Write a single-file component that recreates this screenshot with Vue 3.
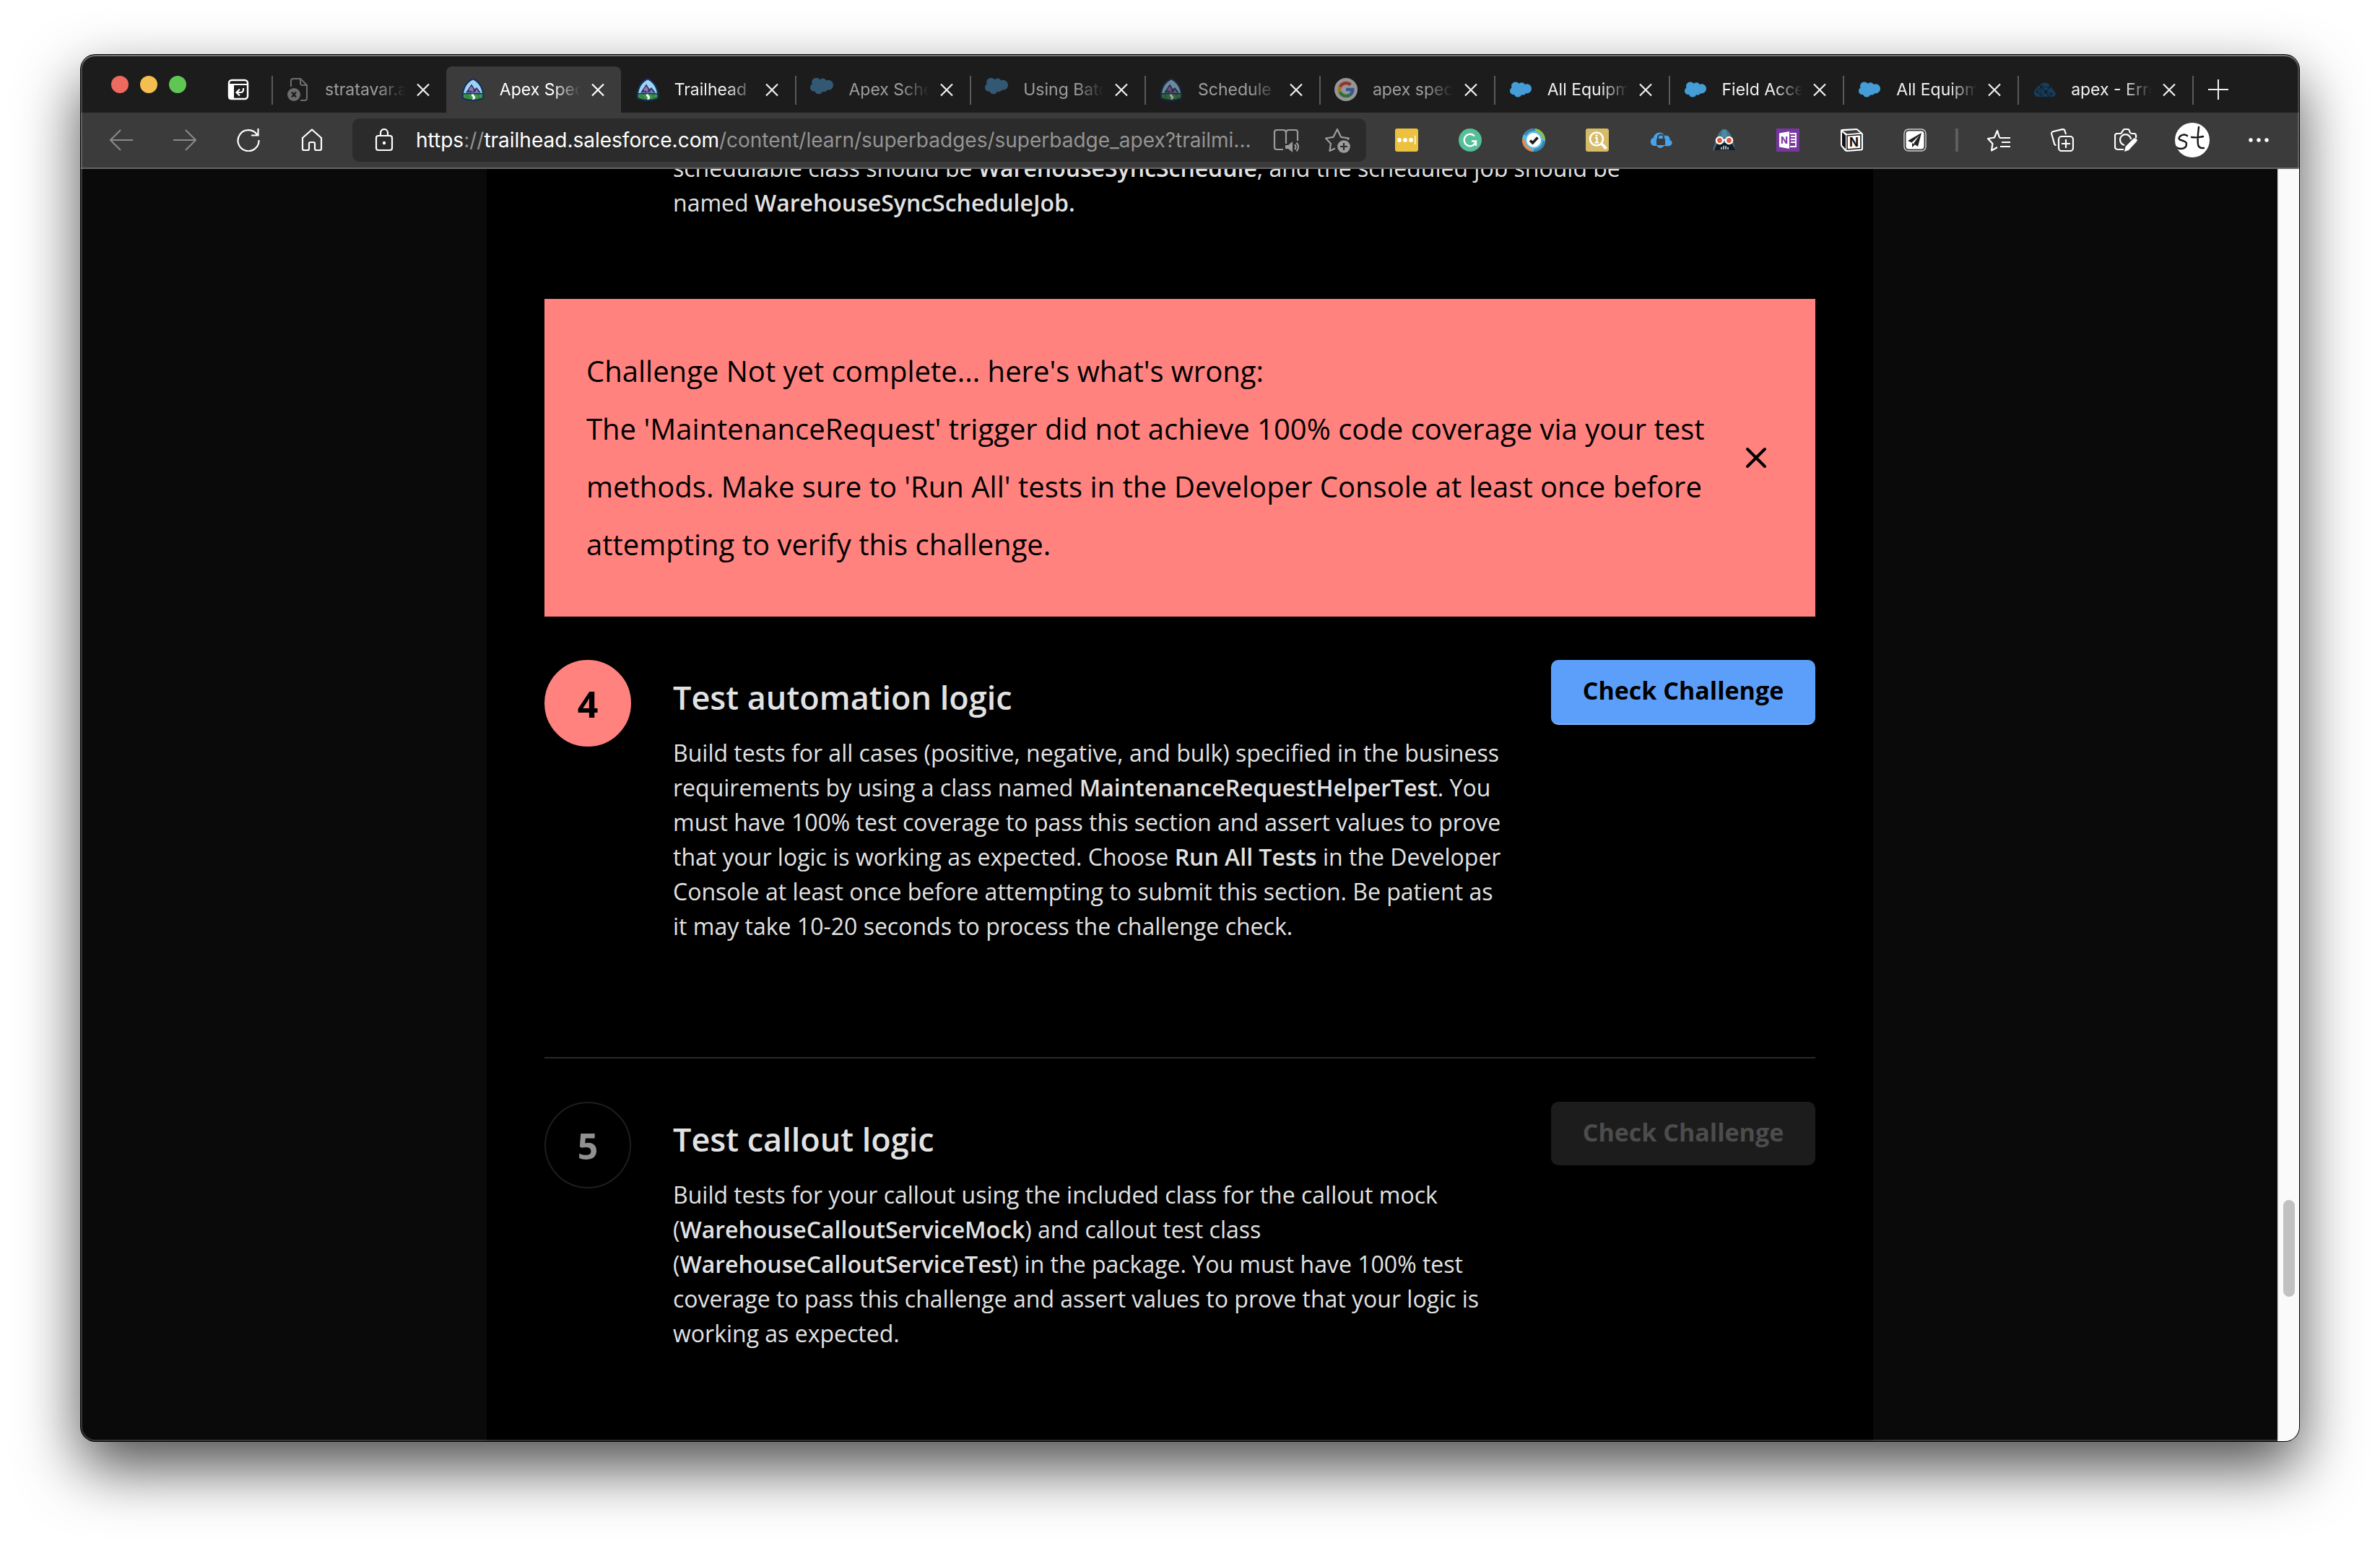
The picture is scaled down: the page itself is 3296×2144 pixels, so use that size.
<script setup>
const tabs = [
  { title: 'stratavar.app', icon: 'broken', dim: true },
  { title: 'Apex Specialist', icon: 'trail', active: true },
  { title: 'Trailhead', icon: 'trail' },
  { title: 'Apex Scheduler', icon: 'cloud-low', dim: true },
  { title: 'Using Batch Apex', icon: 'cloud-low', dim: true },
  { title: 'Schedule Jobs', icon: 'trail', dim: true },
  { title: 'apex specialist', icon: 'google', dim: true },
  { title: 'All Equipment', icon: 'cloud' },
  { title: 'Field Access', icon: 'cloud' },
  { title: 'All Equipment', icon: 'cloud' },
  { title: 'apex - Error', icon: 'net' },
]
const nav = [
  { name: 'Back', icon: 'back', off: true },
  { name: 'Forward', icon: 'forward', off: true },
  { name: 'Refresh', icon: 'reload' },
  { name: 'Home', icon: 'home' },
]
const extensions = [
  { name: 'Passwords', icon: 'dots-card' },
  { name: 'Grammar', icon: 'grammar' },
  { name: 'Tasks', icon: 'check' },
  { name: 'Inspector', icon: 'inspect' },
  { name: 'Cloud lock', icon: 'cloud-lock' },
  { name: 'Vader', icon: 'vader' },
  { name: 'Notebook', icon: 'onenote' },
  { name: 'Notes clipper', icon: 'notion' },
  { name: 'Send', icon: 'plane' },
]
const tools = [
  { name: 'Favorites', icon: 'favorites' },
  { name: 'Collections', icon: 'collections' },
  { name: 'Capture', icon: 'capture' },
]
</script>

<template>
  <div class="desktop">
    <svg class="sprite" aria-hidden="true">
      <symbol id="broken" viewBox="0 0 32 32">
        <path d="M6 12V4q0-3 3-3h10l9 9v18q0 3-3 3h-6M19 1v6q0 3 3 3h6" fill="none" stroke="#a4a4a4" stroke-width="2" />
        <circle cx="10" cy="23" r="9" fill="#a4a4a4" />
        <path d="M7 19.500l6 7M13 19.500l-6 7" stroke="#1c1c1c" stroke-width="2.400" />
      </symbol>
      <symbol id="trail" viewBox="0 0 32 32">
        <path d="M16 0c5 1.500 10 6.500 12.500 12 2 4 3 9 3 14 0 2-1 3-2.500 3.500C24 31.500 20 32 16 32S8 31.500 3 29.500C1.500 29 .5 28 .5 26c0-5 1-10 3-14C6 6.500 11 1.500 16 0z" fill="#16325c" />
        <path d="M16 2.500c4 1.500 8.500 6 10.500 10.500 1.200 2.700 2 5.500 2.300 8H3.200c.3-2.500 1.100-5.300 2.300-8C7.500 8.500 12 4 16 2.500z" fill="#9fd2f4" />
        <path d="M6 20.500l8-12 4.500 7 2.500-2.500 6 7.500z" fill="#16325c" />
        <path d="M10.500 15.500l3.500-4.500 3 5-1.500 4-2.500-2.500-2.500 1.500z" fill="#a06cb8" />
        <path d="M20.500 15l3.500 5h-5z" fill="#a06cb8" />
        <path d="M8 20l3-3 2 3zM15 20l3-3 1 3z" fill="#6b2f8f" />
        <path d="M2.800 22.500h26.400v3.500c0 .8-.4 1.300-1 1.600C24 29.200 20 29.800 16 29.800S8 29.200 3.800 27.600c-.6-.3-1-.8-1-1.600z" fill="#3f9647" />
        <path d="M14 22.500h3c-.5 1.500 1.500 2 2 3.500.3 1.500-.5 2.500-1 3.800l-3 0c1-2 1.500-2.500 0-4-1-1-1.500-2-1-3.300z" fill="#fff" />
        <path d="M6 25h3M8 27h3M22 24h3M23 27h3" stroke="#1f6b33" stroke-width="1.200" />
      </symbol>
      <symbol id="cloud-shape" viewBox="0 0 24 24">
        <path d="M10.006 5.415a4.195 4.195 0 013.045-1.306c1.560 0 2.954.9 3.690 2.205.63-.3 1.350-.45 2.100-.45 2.850 0 5.159 2.340 5.159 5.220s-2.310 5.220-5.176 5.220c-.345 0-.69-.044-1.020-.104a3.750 3.750 0 01-3.300 1.950c-.6 0-1.155-.15-1.650-.375A4.314 4.314 0 018.880 20.400a4.302 4.302 0 01-4.050-2.820c-.27.062-.54.076-.825.076-2.204 0-4.005-1.800-4.005-4.050 0-1.500.811-2.805 2.010-3.510-.255-.57-.39-1.200-.39-1.846 0-2.580 2.100-4.650 4.650-4.650 1.530 0 2.850.705 3.720 1.800" />
      </symbol>
      <symbol id="cloud" viewBox="0 0 32 32"><use href="#cloud-shape" x="1" y="1" width="30" height="30" fill="#459dd8" /></symbol>
      <symbol id="cloud-low" viewBox="0 0 32 32"><use href="#cloud-shape" x="0" y="-5" width="32" height="32" fill="#4181ae" /></symbol>
      <symbol id="google" viewBox="0 0 32 32">
        <circle cx="16" cy="16" r="16" fill="#e8e8e8" />
        <g fill="none" stroke-width="4.500">
          <path d="M7.700 12.500A9.300 9.300 0 0 1 22.500 9.500" stroke="#e04a3f" />
          <path d="M7.700 19.800A9.300 9.300 0 0 1 7.700 12.200" stroke="#f0b52c" />
          <path d="M22.300 22.700A9.300 9.300 0 0 1 7.700 19.500" stroke="#3fa557" />
          <path d="M16 16h9.300a9.300 9.300 0 0 1-3.200 6.900" stroke="#4a80e8" />
        </g>
      </symbol>
      <symbol id="net" viewBox="0 0 32 32">
        <path d="M6 26a6 6 0 0 1-1-11c1-4 3-4 5-4 1-5 11-7 14 0 3 1 4 4 4 6 5 2 5 8 0 9z" fill="#183c5a" />
        <path d="M6 19l6-7 6 7 6-6M12 12l12 1M6 19l6 6 6-6 8 3-4 4-4-7M12 12l-1 13" fill="none" stroke="#11263a" stroke-width="1.200" />
        <g fill="#0d1d2b"><circle cx="6" cy="19" r="1.400" /><circle cx="12" cy="12" r="1.400" /><circle cx="18" cy="19" r="1.800" /><circle cx="24" cy="13" r="1.400" /><circle cx="26" cy="22" r="1.400" /></g>
      </symbol>
      <symbol id="close" viewBox="0 0 32 32"><path d="M8 8.500l16 16M24 8.500l-16 16" stroke="currentColor" stroke-width="2.200" fill="none" /></symbol>
      <symbol id="plus" viewBox="0 0 32 32"><path d="M16 2v28M2 16h28" stroke="currentColor" stroke-width="2" /></symbol>
      <symbol id="tab-actions" viewBox="0 0 32 32">
        <rect x="3" y="3" width="26" height="26" rx="4" fill="none" stroke="#fff" stroke-width="2.400" />
        <path d="M2 8h28v2H10v20H6q-4 0-4-4z" fill="#fff" />
        <path d="M23 14v2q0 4-4 4h-5m4-4.500L13.500 20l4.500 4.500" fill="none" stroke="#fff" stroke-width="2.200" />
      </symbol>
      <symbol id="back" viewBox="0 0 32 32"><path d="M32 16H1M15 2L1 16l14 14" fill="none" stroke="currentColor" stroke-width="2" /></symbol>
      <symbol id="forward" viewBox="0 0 32 32"><path d="M0 16h31M17 2l14 14-14 14" fill="none" stroke="currentColor" stroke-width="2" /></symbol>
      <symbol id="reload" viewBox="0 0 32 32"><path d="M28 8.500A14.500 14.500 0 1 0 30.500 16M29.500 0v9.500h-9.500" fill="none" stroke="currentColor" stroke-width="2.200" /></symbol>
      <symbol id="home" viewBox="0 0 32 32"><path d="M16 1.500L3 13v15q0 2 2 2h5q2 0 2-2v-7q0-2 2-2h4q2 0 2 2v7q0 2 2 2h5q2 0 2-2V13z" fill="none" stroke="currentColor" stroke-width="2.200" stroke-linejoin="round" /></symbol>
      <symbol id="lock" viewBox="0 0 32 32"><rect x="5" y="10" width="22" height="20" rx="3" fill="none" stroke="currentColor" stroke-width="2.200" /><path d="M11 10V6a5 5 0 0 1 10 0v4" fill="none" stroke="currentColor" stroke-width="2.200" /><circle cx="16" cy="20" r="2.200" fill="currentColor" /></symbol>
      <symbol id="reader" viewBox="0 0 36 36">
        <path d="M14 31H5q-3 0-3-3V7q0-3 3-3h9q4 0 4 4 0-4 4-4h9q3 0 3 3v12M18 8v15" fill="none" stroke="currentColor" stroke-width="2.200" />
        <path d="M17 25h4l6-5v15l-6-5h-4z" fill="currentColor" /><path d="M30 24q3 3.500 0 7M32.500 21.500q5 6 0 12" fill="none" stroke="currentColor" stroke-width="2" />
      </symbol>
      <symbol id="star-add" viewBox="0 0 36 36">
        <path d="M15 29.500L7.500 33 9 23 2 15.500l10.500-1.700L18 3l5 10.800 11 1.700-2 2" fill="none" stroke="currentColor" stroke-width="2.200" stroke-linejoin="round" />
        <circle cx="27" cy="27" r="8.800" fill="currentColor" /><path d="M27 22v10M22 27h10" stroke="#2b2b2b" stroke-width="2.200" />
      </symbol>
      <symbol id="dots-card" viewBox="0 0 32 32"><rect width="32" height="32" rx="3" fill="#ebc13d" /><g fill="#fff"><circle cx="6" cy="16" r="2.900" /><circle cx="14" cy="16" r="2.900" /><circle cx="22" cy="16" r="2.900" /><rect x="27" y="10" width="1.500" height="12" /></g></symbol>
      <symbol id="grammar" viewBox="0 0 32 32"><circle cx="16" cy="16" r="16" fill="#54bf98" /><path d="M22 10.500A8.200 8.200 0 1 0 24 17.500h-6M24 17.500V24" fill="none" stroke="#fff" stroke-width="2.400" /></symbol>
      <symbol id="check" viewBox="0 0 32 32">
        <circle cx="16" cy="16" r="16" fill="#58bde8" />
        <g fill="none" stroke-width="3.500"><path d="M18 1.800A14.300 14.300 0 0 1 30.200 16" stroke="#8dbf45" /><path d="M1.800 15A14.300 14.300 0 0 0 14 30.200" stroke="#ee8743" /><path d="M4 9A14.300 14.300 0 0 1 18 1.800M30.200 17A14.300 14.300 0 0 1 16 30.200" stroke="#3a85ae" /></g>
        <circle cx="16" cy="16" r="10" fill="#fff" /><path d="M11 16.500l3.500 3.500 7-7.500" fill="none" stroke="#1a1a1a" stroke-width="3.600" />
      </symbol>
      <symbol id="inspect" viewBox="0 0 32 32"><rect width="32" height="32" rx="3" fill="#d6bc68" /><circle cx="15" cy="14.500" r="9" fill="none" stroke="#fff" stroke-width="2.600" /><path d="M22 21l6.500 7" stroke="#fff" stroke-width="4" /><path d="M13 13h2.500v6M12.500 19.500h5.500" fill="none" stroke="#fff" stroke-width="2.200" /><circle cx="15" cy="9.800" r="1.600" fill="#fff" /></symbol>
      <symbol id="cloud-lock" viewBox="0 0 32 32"><path d="M6 24a6 6 0 0 1 0-11.500C7 6 17 2 21 10c4-1 8 1 7.500 6 4 1 4.500 6 0 8-4 1-7 0-8 0-3 4-8 4-10 0z" fill="#46a2ea" /><rect x="10" y="14" width="12" height="9" rx="1" fill="#3b3b3b" /><path d="M12 14.500v-2a4 4 0 0 1 8 0v2" fill="none" stroke="#3b3b3b" stroke-width="2" /></symbol>
      <symbol id="vader" viewBox="0 0 32 32"><path d="M6 12C8 5 12 1 16 1s8 4 10 11l6 18H0z" fill="#41748a" /><path d="M6 20h20l6 10H2z" fill="#151f29" /><path d="M13 2c2-1 4-1 6 0l1 10h-8z" fill="#4c8aa1" /><g fill="#d8573c" stroke="#fff" stroke-width="2.400"><circle cx="9.500" cy="16.500" r="4.600" /><circle cx="22.500" cy="16.500" r="4.600" /></g><path d="M13.500 16h5" stroke="#fff" stroke-width="2" /><path d="M12 26v3M15 24v5M18 24v5M21 26v3" stroke="#cfe6ee" stroke-width="1.500" /></symbol>
      <symbol id="onenote" viewBox="0 0 32 32"><rect width="32" height="32" fill="#7a36a3" /><path d="M4 6.500L18 4v24L4 25.500z" fill="#fff" /><path d="M19 7h8v18h-8M27 11h-7M27 15h-7M27 19h-7" fill="none" stroke="#fff" stroke-width="1.800" /><text x="11" y="20.500" text-anchor="middle" font-size="13" font-weight="700" fill="#7a36a3">N</text></symbol>
      <symbol id="notion" viewBox="0 0 32 32"><path d="M3 1l20-1q1 0 2 1l6 5q1 1 1 2v20q0 2-2 2.500L10 32q-2 0-3-1l-5-6q-1-1-1-3V3q0-2 2-2z" fill="#fff" /><path d="M4 3.500L23 2l5 4-18 1.500z" fill="#3b3b3b" /><path d="M3 5l5 4.500v19L3 23z" fill="#101010" /><path d="M10 10l19-1.500v19L10 29z" fill="#fff" stroke="#101010" stroke-width="1.500" /><text x="19.500" y="25" text-anchor="middle" font-size="17" font-weight="700" fill="#101010">N</text></symbol>
      <symbol id="plane" viewBox="0 0 32 32"><rect x="1" y="1" width="30" height="30" rx="6" fill="none" stroke="#d0d0d0" stroke-width="1.400" /><rect x="3.500" y="3.500" width="25" height="25" rx="4" fill="#fff" /><path d="M25 6L6 17l5.500 2.500L22 9.500 14 21l6 4z" fill="#222" /><path d="M12 20v6l4-3.500z" fill="#222" /></symbol>
      <symbol id="favorites" viewBox="0 0 32 32"><path d="M17 12.500L14 3l-4 9.500-9 1.500 6.500 7L6 30.500l8-4.500" fill="none" stroke="currentColor" stroke-width="2.200" stroke-linejoin="round" /><path d="M17 13h15M20 19h12M18 25h14" stroke="currentColor" stroke-width="2.200" /></symbol>
      <symbol id="collections" viewBox="0 0 32 32"><rect x="11" y="11" width="20" height="20" rx="4" fill="none" stroke="currentColor" stroke-width="2.200" /><path d="M21 15v12M15 21h12" stroke="currentColor" stroke-width="2.200" /><path d="M7.500 23q-2 0-2.500-2L1.200 7.500Q.8 5 3 4.300L16 1.200q3-.5 3.600 2L21 8" fill="none" stroke="currentColor" stroke-width="2.200" /></symbol>
      <symbol id="capture" viewBox="0 0 32 32"><path d="M13 29H5q-4 0-4-4V10q0-3 3-3h4q2 0 2.500-2L12 3q.6-2 2.500-2h4q2 0 2.500 2l.6 2q.6 2 2.500 2h3q3 0 3 3v3" fill="none" stroke="currentColor" stroke-width="2.200" /><path d="M14 23a7.500 7.500 0 1 1 9-8" fill="none" stroke="currentColor" stroke-width="2.200" /><path d="M14 32l1.500-7L27 13.500q3-1 4.500 1.500.5 2-.5 3L20 30z" fill="currentColor" /></symbol>
      <symbol id="more" viewBox="0 0 32 32"><g fill="currentColor"><circle cx="5" cy="16" r="2.700" /><circle cx="16" cy="16" r="2.700" /><circle cx="27" cy="16" r="2.700" /></g></symbol>
      <symbol id="dismiss" viewBox="0 0 32 32"><path d="M4 4l24 24M28 4L4 28" stroke="currentColor" stroke-width="4" stroke-linecap="round" /></symbol>
    </svg>

    <div class="window">
      <header class="tab-strip">
        <div class="lights"><i class="red"></i><i class="yellow"></i><i class="green"></i></div>
        <button class="icon-btn tab-actions" aria-label="Tab actions"><svg class="icon"><use href="#tab-actions" /></svg></button>
        <nav class="tabs" aria-label="Tabs">
          <div v-for="(tab, i) in tabs" :key="i" class="tab" :class="{ active: tab.active, dim: tab.dim }">
            <svg class="icon favicon"><use :href="'#' + tab.icon" /></svg>
            <a class="tab-title" href="#">{{ tab.title }}</a>
            <button class="icon-btn" aria-label="Close tab"><svg class="icon"><use href="#close" /></svg></button>
          </div>
        </nav>
        <button class="icon-btn new-tab" aria-label="New tab"><svg class="icon"><use href="#plus" /></svg></button>
      </header>

      <div class="toolbar">
        <div class="group">
          <button v-for="n in nav" :key="n.name" class="icon-btn" :class="{ off: n.off }" :aria-label="n.name"><svg class="icon"><use :href="'#' + n.icon" /></svg></button>
        </div>
        <div class="address">
          <svg class="icon"><use href="#lock" /></svg>
          <div class="url" role="textbox" aria-label="Address"><b>https</b>://<b>trailhead.salesforce.com</b>/content/learn/superbadges/superbadge_apex?trailmi...</div>
          <button class="icon-btn wide" aria-label="Read aloud"><svg class="icon"><use href="#reader" /></svg></button>
          <button class="icon-btn wide" aria-label="Add to favorites"><svg class="icon"><use href="#star-add" /></svg></button>
        </div>
        <div class="group">
          <button v-for="e in extensions" :key="e.name" class="icon-btn" :aria-label="e.name"><svg class="icon"><use :href="'#' + e.icon" /></svg></button>
        </div>
        <span class="rule"></span>
        <div class="group">
          <button v-for="t in tools" :key="t.name" class="icon-btn" :aria-label="t.name"><svg class="icon"><use :href="'#' + t.icon" /></svg></button>
        </div>
        <button class="avatar" aria-label="Profile">
          <svg viewBox="0 0 48 48"><path d="M17 18q-4-3-9 0-5 4 0 6 8 2 8 5 0 7-8 7-5 0-7-3M33 6q-2 15-1 24 1 6 8 5M23 20q9 1 16-1" fill="none" stroke="#151515" stroke-width="2.400" stroke-linecap="round" /></svg>
        </button>
        <button class="icon-btn" aria-label="Settings and more"><svg class="icon"><use href="#more" /></svg></button>
      </div>

      <div class="viewport">
        <div class="page">
          <main class="column">
            <p class="copy previous">schedulable class should be <strong>WarehouseSyncSchedule</strong>, and the scheduled job should be named <strong>WarehouseSyncScheduleJob.</strong></p>

            <section class="alert" role="alert">
              <p>Challenge Not yet complete... here's what's wrong:<br>The 'MaintenanceRequest' trigger did not achieve 100% code coverage via your test methods. Make sure to 'Run All' tests in the Developer Console at least once before attempting to verify this challenge.</p>
              <button class="dismiss" aria-label="Dismiss"><svg class="icon"><use href="#dismiss" /></svg></button>
            </section>

            <section class="step">
              <span class="number failed">4</span>
              <div class="body">
                <h2>Test automation logic</h2>
                <p class="copy">Build tests for all cases (positive, negative, and bulk) specified in the business requirements by using a class named <strong>MaintenanceRequestHelperTest</strong>. You must have 100% test coverage to pass this section and assert values to prove that your logic is working as expected. Choose <strong>Run All Tests</strong> in the Developer Console at least once before attempting to submit this section. Be patient as it may take 10-20 seconds to process the challenge check.</p>
              </div>
              <button class="check primary">Check Challenge</button>
            </section>

            <section class="step">
              <span class="number">5</span>
              <div class="body">
                <h2>Test callout logic</h2>
                <p class="copy">Build tests for your callout using the included class for the callout mock (<strong>WarehouseCalloutServiceMock</strong>) and callout test class (<strong>WarehouseCalloutServiceTest</strong>) in the package. You must have 100% test coverage to pass this challenge and assert values to prove that your logic is working as expected.</p>
              </div>
              <button class="check" disabled>Check Challenge</button>
            </section>
          </main>
        </div>
        <div class="scrollbar"><div class="thumb"></div></div>
      </div>
    </div>
  </div>
</template>

<style>
body {
  margin: 0;
  background: #fff;
}
</style>

<style scoped>
* {
  box-sizing: border-box;
}
.desktop {
  height: 100vh;
  padding: 76px 112px 148px;
  overflow: hidden;
  font-family: Inter, "Liberation Sans", sans-serif;
}
.sprite {
  position: absolute;
  width: 0;
  height: 0;
}
.window {
  position: relative;
  display: flex;
  flex-direction: column;
  height: 100%;
  border-radius: 20px;
  background: #0a0a0a;
  box-shadow: 0 0 0 1px #000, 0 36px 84px rgba(0, 0, 0, 0.7);
}
.window::after {
  content: "";
  position: absolute;
  inset: 0;
  border-radius: 20px;
  box-shadow: inset 0 2px 0 rgba(255, 255, 255, 0.25), inset 0 0 0 2px rgba(255, 255, 255, 0.18);
  pointer-events: none;
}
button {
  margin: 0;
  padding: 0;
  border: 0;
  background: none;
  color: inherit;
  font: inherit;
}
.icon {
  display: block;
  width: 100%;
  height: 100%;
}
.icon-btn {
  flex: none;
  width: 32px;
  height: 32px;
}

/* Tab strip */
.tab-strip {
  display: flex;
  flex: none;
  align-items: flex-end;
  height: 80px;
  padding: 0 76px 0 42px;
  border-radius: 20px 20px 0 0;
  background: #1c1c1c;
  color: #f0f0f0;
}
.lights {
  display: flex;
  gap: 16px;
  margin-bottom: 27px;
}
.lights i {
  width: 24px;
  height: 24px;
  border-radius: 50%;
}
.red { background: #ed6a5e; }
.yellow { background: #f5bf4f; }
.green { background: #61c554; }
.tab-actions {
  margin: 0 30px 16px 56px;
}
.tabs {
  display: flex;
  flex: 1;
  min-width: 0;
}
.tab {
  position: relative;
  display: flex;
  flex: 1;
  align-items: center;
  min-width: 0;
  height: 64px;
  padding: 0 16px 0 21px;
}
.tab::before,
.new-tab::before {
  content: "";
  position: absolute;
  left: 0;
  top: 13px;
  width: 2px;
  height: 40px;
  background: #5a5a5a;
}
.tab.active {
  border-radius: 8px 8px 0 0;
  background: #3b3b3b;
  color: #fff;
}
.tab.active::before,
.tab.active + .tab::before {
  display: none;
}
.favicon {
  flex: none;
  width: 32px;
  height: 32px;
}
.tab-title {
  flex: 1;
  min-width: 0;
  margin: 0 6px 0 21px;
  overflow: hidden;
  color: inherit;
  font-size: 23px;
  line-height: 32px;
  text-decoration: none;
  white-space: nowrap;
  mask-image: linear-gradient(90deg, #000 65%, transparent 98%);
}
.dim .favicon,
.dim .tab-title {
  opacity: 0.6;
}
.new-tab {
  position: relative;
  width: 72px;
  height: 64px;
}
.new-tab .icon {
  width: 32px;
  height: 32px;
  margin: 0 auto;
}

/* Toolbar */
.toolbar {
  display: flex;
  flex: none;
  align-items: center;
  height: 78px;
  padding: 0 40px;
  border-bottom: 2px solid #636363;
  background: #3b3b3b;
  color: #fff;
}
.group {
  display: flex;
  gap: 56px;
}
.off {
  color: #8a8a8a;
}
.address {
  display: flex;
  flex: 1;
  align-items: center;
  min-width: 0;
  height: 60px;
  margin: 0 40px;
  padding: 0 22px 0 28px;
  border-radius: 10px;
  background: #2b2b2b;
}
.address > .icon {
  flex: none;
  width: 32px;
  height: 32px;
}
.url {
  flex: 1;
  min-width: 0;
  margin-left: 28px;
  overflow: hidden;
  color: #949494;
  font-size: 28px;
  line-height: 40px;
  white-space: nowrap;
}
.url b {
  color: #fff;
  font-weight: 400;
}
.wide {
  width: 36px;
  height: 36px;
  color: #9c9c9c;
}
.wide + .wide {
  margin-left: 35px;
}
.rule {
  width: 4px;
  height: 32px;
  margin: 0 40px;
  background: #5e5e5e;
}
.avatar {
  width: 48px;
  height: 48px;
  margin: 0 52px;
  overflow: hidden;
  border-radius: 50%;
  background: #fff;
}
.avatar svg {
  display: block;
}

/* Page */
.viewport {
  display: flex;
  flex: 1;
  min-height: 0;
  overflow: hidden;
  border-radius: 0 0 20px 20px;
}
.page {
  display: flex;
  flex: 1;
  justify-content: center;
  padding-left: 2px;
  background: #0a0a0a;
  color: #e2e2e2;
  font-family: "Open Sans", "Noto Sans", sans-serif;
}
.column {
  width: 1920px;
  max-width: 100%;
  margin-top: -25px;
  padding: 0 80px;
  background: #000;
}
.copy {
  margin: 0;
  font-size: 32px;
  line-height: 48px;
}
.copy strong {
  font-weight: 600;
}
.previous {
  padding: 0 240px 0 178px;
}
.alert {
  display: flex;
  align-items: center;
  justify-content: space-between;
  gap: 20px;
  margin: 109px 0 60px;
  padding: 60px 60px 60px 58px;
  background: #ff827f;
  color: #000;
}
.alert p {
  margin: 0;
  font-size: 40px;
  line-height: 80px;
}
.dismiss {
  flex: none;
  width: 44px;
  height: 44px;
  padding: 6px;
}
.step {
  display: flex;
  align-items: flex-start;
}
.step + .step {
  margin-top: 157px;
  padding-top: 60px;
  border-top: 2px solid #2a2a2a;
}
.number {
  display: flex;
  flex: none;
  align-items: center;
  justify-content: center;
  width: 120px;
  height: 120px;
  padding-top: 2px;
  border: 2px solid #1e1e1e;
  border-radius: 50%;
  color: #919191;
  font-size: 50px;
  font-weight: 700;
}
.number.failed {
  border-color: #ff827f;
  background: #ff827f;
  color: #000;
}
.body {
  flex: 1;
  min-width: 0;
  margin: 22px 60px 0 58px;
}
h2 {
  margin: 0 0 23px;
  font-size: 45px;
  font-weight: 600;
  line-height: 60px;
}
.check {
  flex: none;
  width: 366px;
  height: 88px;
  padding-bottom: 4px;
  border-radius: 10px;
  background: #1c1c1c;
  color: #4c4c4c;
  font-size: 34px;
  font-weight: 700;
}
.check.primary {
  height: 90px;
  border-bottom: 2px solid #7ab0ff;
  background: #5c9ffb;
  color: #000;
}
.scrollbar {
  display: flex;
  flex-direction: column;
  width: 30px;
  padding: 6px;
  border-left: 2px solid #e8e8e8;
  background: #fafafa;
}
.scrollbar::before {
  content: "";
  flex: 1422;
}
.scrollbar::after {
  content: "";
  flex: 194;
}
.thumb {
  width: 16px;
  height: 134px;
  border-radius: 8px;
  background: #c1c1c1;
}
</style>
